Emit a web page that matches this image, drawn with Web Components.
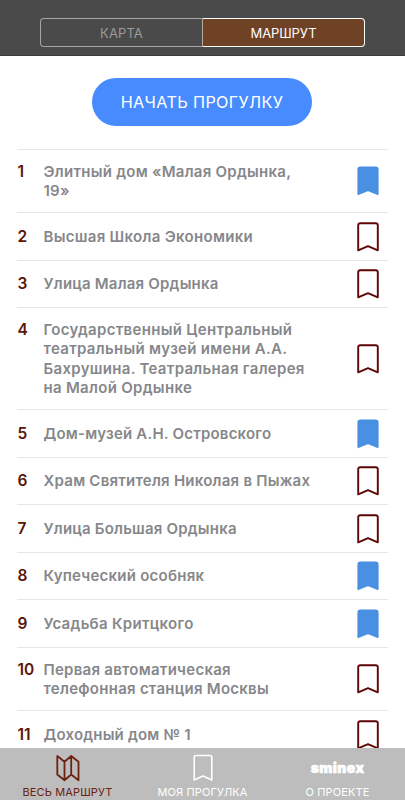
<!DOCTYPE html>
<html lang="ru">
<head>
<meta charset="utf-8">
<title>Маршрут</title>
<style>
html,body{margin:0;height:100%;overflow:hidden;background:#fff;font-family:Inter,"Liberation Sans",sans-serif}
</style>
</head>
<body>
<walk-app></walk-app>
<script>
class BaseElement extends HTMLElement {
  constructor() { super(); this.attachShadow({mode: 'open'}); }
  connectedCallback() { this.shadowRoot.innerHTML = this.render(); }
}

customElements.define('view-switch', class extends BaseElement {
  render() {
    return `<style>
      :host{display:flex;justify-content:center;align-items:flex-start;box-sizing:border-box;height:56px;padding:18px 0 0;background:#4a4a4a;border-bottom:1px solid #3a3a3a;flex:none}
      div{box-sizing:border-box;height:29px;border:1.4px solid #a6a6a6;display:flex;align-items:center;justify-content:center;font-size:13px;letter-spacing:.1px;color:#9b9b9b;padding-top:1px}
      .l{width:162px;border-radius:4px 0 0 4px;border-right:0}
      .r{width:163px;border-color:#fff;border-left-color:#b5aaa4;border-radius:0 4px 4px 0;background:#704225;color:#fff;letter-spacing:-.1px}
    </style><div class="l">КАРТА</div><div class="r">МАРШРУТ</div>`;
  }
});

customElements.define('start-button', class extends BaseElement {
  render() {
    return `<style>
      :host{display:flex;justify-content:center;padding:22px 1px 23px 0;flex:none}
      button{width:220px;height:48px;border:0;border-radius:24px;padding:0;background:#478bff;color:#fff;font:16.2px Inter,sans-serif;letter-spacing:.35px}
    </style><button><slot></slot></button>`;
  }
});

customElements.define('book-mark', class extends BaseElement {
  render() {
    const on = this.hasAttribute('saved');
    return `<style>:host{display:block;width:22px;height:30px}svg{display:block}</style>
      <svg width="22" height="30" viewBox="0 0 22 30"><path d="M1.2 28.3V3.3Q1.2 1.2 3.3 1.2H18.7Q20.8 1.2 20.8 3.3V28.3L11 24.2Z" fill="${on ? '#4990e2' : 'none'}" stroke="${on ? '#4990e2' : '#5e0505'}" stroke-width="${on ? 1.6 : 1.9}" stroke-linejoin="round"/></svg>`;
  }
});

customElements.define('route-stop', class extends BaseElement {
  render() {
    return `<style>
      :host{display:grid;grid-template-columns:26.5px 1fr 22px;align-items:center;box-sizing:border-box;height:var(--h,48px);margin:0 17px;padding-right:9px;border-top:1px solid #e6e6e6;font-size:15px;line-height:19.4px;font-weight:600;flex:none}
      .n{color:#5a1507;font-size:15.5px;padding-left:.5px}
      .t{color:#86878b;letter-spacing:var(--ls,.3px);white-space:nowrap}
    </style>
    <div class="n">${this.getAttribute('n')}${'<br>&nbsp;'.repeat(+this.getAttribute('lines') - 1)}</div>
    <div class="t"><slot></slot></div>
    <book-mark ${this.hasAttribute('saved') ? 'saved' : ''}></book-mark>`;
  }
});

customElements.define('tab-item', class extends BaseElement {
  render() {
    return `<style>
      :host{display:flex;flex-direction:column;align-items:center;width:135px;color:#fff;font-size:11px;line-height:14px}
      .i{height:29px;padding-top:6px;display:flex;align-items:flex-start;justify-content:center}
      .t{letter-spacing:.13px;white-space:nowrap;padding-top:1.5px}
    </style><div class="i"><slot name="icon"></slot></div><div class="t"><slot></slot></div>`;
  }
});

customElements.define('tab-bar', class extends BaseElement {
  render() {
    return `<style>
      :host{position:absolute;left:0;right:0;bottom:0;height:52px;display:flex;background:#bdbdbd;box-sizing:border-box}
      svg{display:block}
      .logo{font:900 14px/16px Inter,sans-serif;padding-top:6px;letter-spacing:.35px;-webkit-text-stroke:.6px #fff}
      .active{color:#6b2210}
    </style>
    <tab-item class="active"><svg slot="icon" width="24" height="28" viewBox="0 0 24 28" fill="none" stroke="currentColor" stroke-width="1.8" stroke-linejoin="round"><path d="M1.3 2V20.5L8.5 26.2L15.2 20.5L22.5 26.2V7.7L15.2 2L8.5 7.7ZM8.5 7.7V26.2M15.2 2V20.5"/></svg>ВЕСЬ МАРШРУТ</tab-item>
    <tab-item><svg slot="icon" width="20" height="28" viewBox="0 0 20 28" fill="none" stroke="#fff" stroke-width="1.6" stroke-linejoin="round"><path d="M1.2 26V3.5Q1.2 1.5 3.2 1.5H16.8Q18.8 1.5 18.8 3.5V26L10 22Z"/></svg>МОЯ ПРОГУЛКА</tab-item>
    <tab-item><span slot="icon" class="logo">sminex</span>О ПРОЕКТЕ</tab-item>`;
  }
});

customElements.define('walk-app', class extends BaseElement {
  render() {
    return `<style>:host{display:flex;flex-direction:column;position:relative;width:405px;height:800px;overflow:hidden;background:#fff}</style>
    <view-switch></view-switch>
    <start-button>НАЧАТЬ ПРОГУЛКУ</start-button>
    <route-stop n="1" lines="2" saved style="--h:63px;--ls:.26px">Элитный дом «Малая Ордынка,<br>19»</route-stop>
    <route-stop n="2" lines="1">Высшая Школа Экономики</route-stop>
    <route-stop n="3" lines="1" style="--h:47px;--ls:.2px">Улица Малая Ордынка</route-stop>
    <route-stop n="4" lines="4" style="--h:102px">Государственный Центральный<br>театральный музей имени А.А.<br>Бахрушина. Театральная галерея<br>на Малой Ордынке</route-stop>
    <route-stop n="5" lines="1" saved style="--ls:.2px">Дом-музей А.Н. Островского</route-stop>
    <route-stop n="6" lines="1" style="--h:47px;--ls:.24px">Храм Святителя Николая в Пыжах</route-stop>
    <route-stop n="7" lines="1" style="--ls:.2px">Улица Большая Ордынка</route-stop>
    <route-stop n="8" lines="1" saved style="--h:47px;--ls:.24px">Купеческий особняк</route-stop>
    <route-stop n="9" lines="1" saved>Усадьба Критцкого</route-stop>
    <route-stop n="10" lines="2" style="--h:63px;--ls:.26px">Первая автоматическая<br>телефонная станция Москвы</route-stop>
    <route-stop n="11" lines="1" style="--ls:.2px">Доходный дом № 1</route-stop>
    <tab-bar></tab-bar>`;
  }
});
</script>
</body>
</html>
